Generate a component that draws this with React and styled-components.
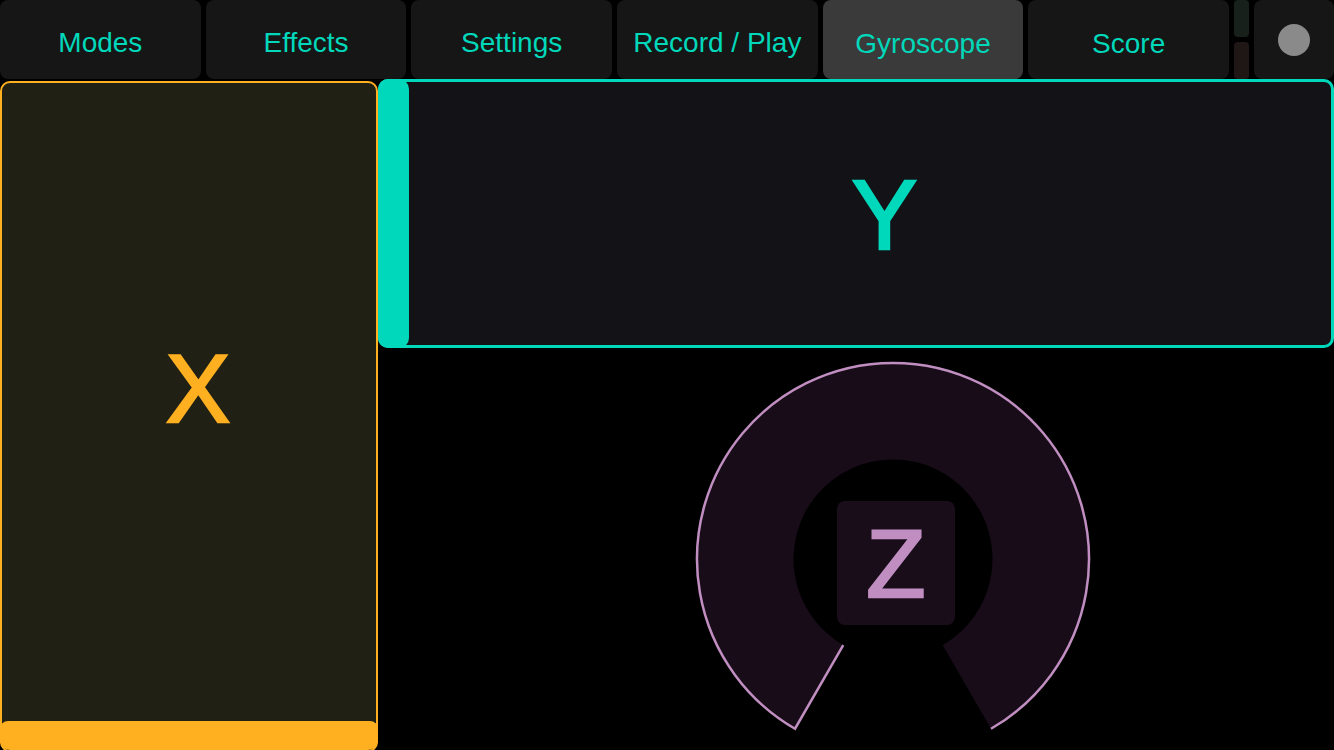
import React from 'react'
import styled, { createGlobalStyle } from 'styled-components'

const GlobalStyle = createGlobalStyle`
  html, body {
    margin: 0;
    background: #000;
  }
  body {
    font-family: "Liberation Sans", Arial, sans-serif;
  }
`

const tabs = [
  { label: 'Modes' },
  { label: 'Effects' },
  { label: 'Settings' },
  { label: 'Record / Play' },
  { label: 'Gyroscope', active: true, low: true },
  { label: 'Score', low: true },
]

// knob geometry (svg is 400x400, centre 200/200)
const R_OUT = 196
const R_IN = 99.5
const GAP = 30
const pt = (r, deg) => {
  const a = (deg * Math.PI) / 180
  return [200 + r * Math.cos(a), 200 + r * Math.sin(a)]
}
const [olx, oly] = pt(R_OUT, 90 + GAP)
const [orx, ory] = pt(R_OUT, 90 - GAP)
const [ilx, ily] = pt(R_IN, 90 + GAP)
const [irx, iry] = pt(R_IN, 90 - GAP)

const Screen = styled.div`
  width: 1334px;
  height: 750px;
  overflow: hidden;
  display: flex;
  flex-direction: column;
  background: #000;
`

const TopBar = styled.nav`
  display: flex;
  gap: 5px;
  height: 79px;
  flex-shrink: 0;
`

const Tab = styled.button`
  flex: 1;
  border: 0;
  border-radius: 8px;
  background: ${p => (p.$active ? '#3a3a3a' : '#161616')};
  color: #00d8bb;
  font: 28px "Liberation Sans", Arial, sans-serif;
  padding: ${p => (p.$low ? '9px 0 0' : '6px 0 0')};
  display: flex;
  align-items: center;
  justify-content: center;
  cursor: pointer;
`

const Meters = styled.div`
  width: 15px;
  display: flex;
  flex-direction: column;
  gap: 5px;
`

const Meter = styled.div`
  flex: 1;
  border-radius: 4px;
  background: ${p => p.$tone};
`

const RecordButton = styled.button`
  width: 80px;
  border: 0;
  border-radius: 8px;
  background: #161616;
  display: flex;
  align-items: center;
  justify-content: center;
  padding: 0;
`

const Dot = styled.span`
  width: 32px;
  height: 32px;
  border-radius: 50%;
  background: #8a8a8a;
`

const Main = styled.div`
  flex: 1;
  min-height: 0;
  display: grid;
  grid-template-columns: 378px 1fr;
  align-items: start;
`

const XPanel = styled.section`
  box-sizing: border-box;
  margin-top: 2px;
  height: 671px;
  border: 2px solid #ffb020;
  border-radius: 10px;
  background: #202014;
  display: flex;
  flex-direction: column;
`

const XArea = styled.div`
  flex: 1;
  display: flex;
  align-items: center;
  justify-content: center;
  padding: 0 0 26px 18px;
`

const Letter = styled.span`
  font-size: ${p => p.$size}px;
  line-height: 1;
  color: ${p => p.$color};
  -webkit-text-stroke: 2.5px ${p => p.$color};
`

const XBar = styled.div`
  height: 29px;
  flex-shrink: 0;
  margin: 0 -2px 0 -2px;
  border-radius: 8px 8px 10px 10px;
  background: #ffb020;
`

const RightColumn = styled.div`
  display: flex;
  flex-direction: column;
  height: 100%;
`

const YPanel = styled.section`
  box-sizing: border-box;
  height: 269px;
  flex-shrink: 0;
  border: 3px solid #00d8bb;
  border-radius: 10px;
  background: #131317;
  display: flex;
`

const YBar = styled.div`
  width: 31px;
  margin: -3px 0 -3px -3px;
  border-radius: 10px;
  background: #00d8bb;
`

const YArea = styled.div`
  flex: 1;
  display: flex;
  align-items: center;
  justify-content: center;
  padding: 3px 0 0 29px;
`

const KnobArea = styled.div`
  flex: 1;
  display: flex;
  justify-content: center;
  align-items: flex-start;
  padding: 11px 0 0 74px;
`

const Knob = styled.div`
  width: 400px;
  height: 400px;
  display: grid;
  place-items: center;

  & > * {
    grid-area: 1 / 1;
  }
`

const ZBox = styled.div`
  width: 118px;
  height: 124px;
  margin: 8px 0 0 6px;
  border-radius: 8px;
  background: #180d19;
  display: flex;
  align-items: center;
  justify-content: center;
`

const App = () => {
  return (
    <Screen>
      <GlobalStyle />
      <TopBar>
        {tabs.map(t => (
          <Tab key={t.label} $active={t.active} $low={t.low}>
            {t.label}
          </Tab>
        ))}
        <Meters>
          <Meter $tone="#17201a" />
          <Meter $tone="#1f1716" />
        </Meters>
        <RecordButton>
          <Dot />
        </RecordButton>
      </TopBar>

      <Main>
        <XPanel>
          <XArea>
            <Letter $size={96} $color="#ffb020">X</Letter>
          </XArea>
          <XBar />
        </XPanel>

        <RightColumn>
          <YPanel>
            <YBar />
            <YArea>
              <Letter $size={98} $color="#00d8bb">Y</Letter>
            </YArea>
          </YPanel>

          <KnobArea>
            <Knob>
              <svg width="400" height="400" viewBox="0 0 400 400">
                <path
                  d={`M ${olx} ${oly} A ${R_OUT} ${R_OUT} 0 1 1 ${orx} ${ory} L ${irx} ${iry} A ${R_IN} ${R_IN} 0 1 0 ${ilx} ${ily} Z`}
                  fill="#170c18"
                />
                <path
                  d={`M ${ilx} ${ily} L ${olx} ${oly} A ${R_OUT} ${R_OUT} 0 1 1 ${orx} ${ory}`}
                  fill="none"
                  stroke="#c08ec0"
                  strokeWidth="2.5"
                />
              </svg>
              <ZBox>
                <Letter $size={97} $color="#c08ec0">Z</Letter>
              </ZBox>
            </Knob>
          </KnobArea>
        </RightColumn>
      </Main>
    </Screen>
  )
}

export default App
